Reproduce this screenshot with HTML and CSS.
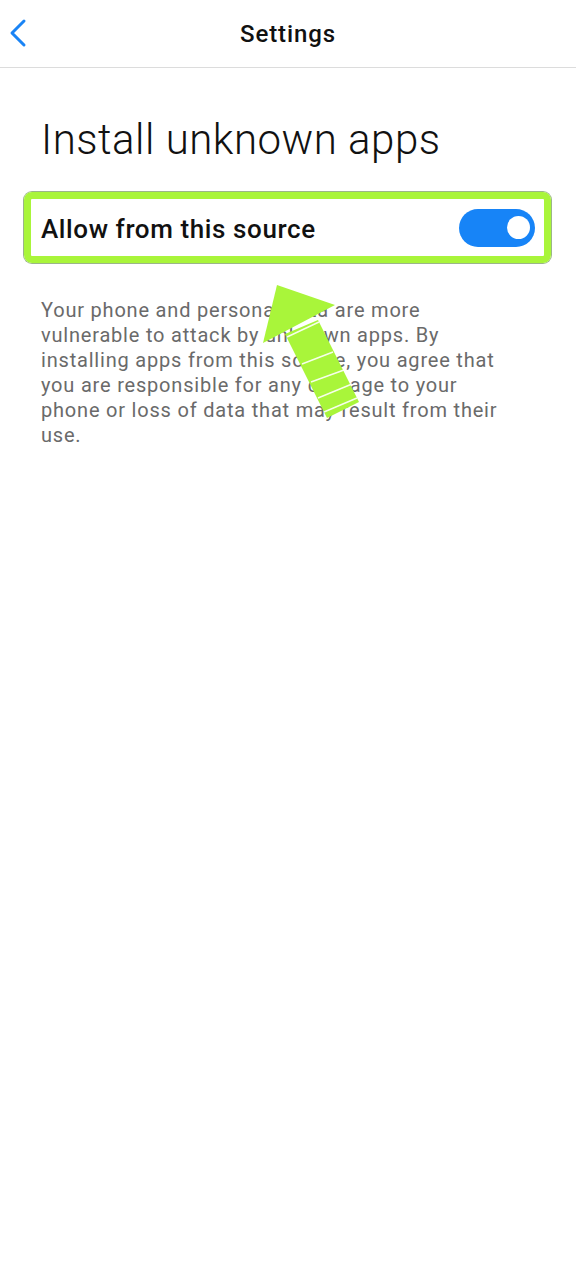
FILE: index.html
```html
<!DOCTYPE html>
<html lang="en">
<head>
<meta charset="utf-8">
<link rel="stylesheet" href="styles.css">
</head>
<body>
<div class="screen">
  <header class="topbar">
    <button class="back" aria-label="Back">
      <svg width="20" height="30" viewBox="0 0 20 30"><path d="M16 3 L4 15 L16 27" fill="none" stroke="#1a84f5" stroke-width="3" stroke-linecap="round" stroke-linejoin="round"/></svg>
    </button>
    <h1 class="topbar-title">Settings</h1>
  </header>
  <main class="content">
    <h2 class="page-title">Install unknown apps</h2>
    <div class="highlight">
      <div class="row">
        <span class="row-label">Allow from this source</span>
        <span class="toggle"><span class="knob"></span></span>
      </div>
    </div>
    <p class="desc">Your phone and personal data are more vulnerable to attack by unknown apps. By installing apps from this source, you agree that you are responsible for any damage to your phone or loss of data that may result from their use.</p>
  </main>
  <svg class="arrow" width="576" height="480" viewBox="0 0 576 480">
    <g fill="#a9f53a">
      <polygon points="277,285 335,305 263,343"/>
      <polygon points="285,334 318,320 359,402 327,418"/>
    </g>
    <g stroke="#ffffff" stroke-width="1.5" opacity="0.9">
      <line x1="287" y1="337" x2="319" y2="322"/>
      <line x1="302" y1="364" x2="333" y2="352"/>
      <line x1="311" y1="382" x2="344" y2="370"/>
      <line x1="318" y1="398" x2="352" y2="384"/>
      <line x1="324" y1="412" x2="357" y2="398"/>
    </g>
  </svg>
</div>
</body>
</html>
```

FILE: styles.css
```css
* { box-sizing: border-box; }
html, body { margin: 0; padding: 0; background: #ffffff; }
body { font-family: Roboto, "Noto Sans", sans-serif; }
.screen { position: relative; width: 576px; min-height: 1280px; }
.topbar {
  position: relative;
  height: 68px;
  border-bottom: 1px solid #dcdcdc;
  display: flex;
  align-items: center;
  justify-content: center;
}
.back {
  position: absolute;
  left: 8px;
  top: 18px;
  border: 0;
  background: none;
  padding: 0;
  width: 20px;
  height: 30px;
}
.back svg { display: block; }
.topbar-title {
  margin: 0;
  font-size: 24px;
  font-weight: 500;
  letter-spacing: 0.9px;
  color: #111;
  line-height: 1;
}
.content { padding: 45px 25px 0 24px; }
.page-title {
  margin: 0 0 0 17px;
  font-size: 42px;
  font-weight: 300;
  letter-spacing: 0.5px;
  color: #111;
  line-height: 54px;
}
.highlight {
  margin-top: 25px;
  height: 71px;
  border: 7px solid #a9f53a;
  border-radius: 8px;
  box-shadow: 0 0 0 1px #9bb58a;
  padding: 0 9px 0 10px;
  display: flex;
  align-items: center;
}
.row { flex: 1; display: flex; align-items: center; justify-content: space-between; padding-top: 3px; }
.row-label { font-size: 26px; font-weight: 500; letter-spacing: 0.6px; color: #111; }
.toggle {
  width: 76px;
  height: 38px;
  border-radius: 19px;
  background: #1784f7;
  display: flex;
  align-items: center;
  justify-content: flex-end;
  padding-right: 5px;
  margin-top: -3px;
}
.knob { width: 23px; height: 23px; border-radius: 50%; background: #fff; }
.desc {
  margin: 35px 30px 0 17px;
  font-size: 20px;
  line-height: 25px;
  letter-spacing: 0.8px;
  color: #6a6a6a;
}
.arrow { position: absolute; left: 0; top: 0; pointer-events: none; }
```
